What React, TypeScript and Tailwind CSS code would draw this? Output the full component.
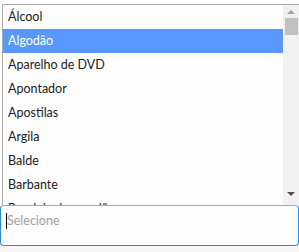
import React from 'react';

const items = [
  'Álcool',
  'Algodão',
  'Aparelho de DVD',
  'Apontador',
  'Apostilas',
  'Argila',
  'Balde',
  'Barbante',
  'Bandeja de papelão',
];

const App = () => {
  return (
    <div className="w-[299px] h-[252px] bg-[#f6f6f6] font-['Lato',sans-serif] overflow-hidden">
      <div className="bg-white pt-[4px]">
        <div className="ml-[2px] h-[201px] flex border-t border-l border-[#a9a9a9] bg-[#fdfdfd]">
          <ul className="flex-1 overflow-hidden">
            {items.map((item, i) => (
              <li
                key={item}
                className={
                  'h-[24px] flex items-center pl-[5px] text-[12.5px] ' +
                  (i === 1 ? 'bg-[#5897fb] text-white' : 'text-[#222]')
                }
              >
                {item}
              </li>
            ))}
          </ul>
          <div className="w-[16px] bg-[#f1f1f1] flex flex-col items-center">
            <svg width="8" height="5" viewBox="0 0 8 5" className="mt-[4px]">
              <path d="M0 5 L4 1 L8 5 Z" fill="#a3a3a3" />
            </svg>
            <div className="mt-[4px] w-[13px] h-[17px] bg-[#c1c1c1]" />
            <div className="flex-1" />
            <svg width="8" height="5" viewBox="0 0 8 5" className="mb-[8px]">
              <path d="M0 0 L8 0 L4 4 Z" fill="#505050" />
            </svg>
          </div>
        </div>
      </div>
      <div className="h-[41px] rounded-[4px] border border-[#1a8cff] border-t-[#a9a9a9] bg-[#fdfdfd] flex items-start pt-[6px] pl-[5px]">
        <span className="w-px h-[16px] bg-black mt-[1px]" />
        <span className="text-[12.5px] text-[#a0a0a0] leading-[18px]">Selecione</span>
      </div>
    </div>
  );
};

export default App;
